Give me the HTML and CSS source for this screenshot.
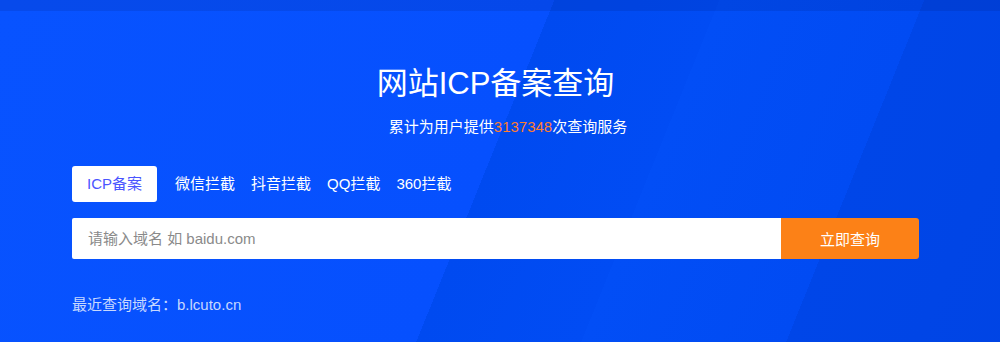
FILE: index.html
```html
<!DOCTYPE html>
<html lang="zh-CN">
<head>
<meta charset="utf-8">
<title>网站ICP备案查询</title>
<link rel="stylesheet" href="styles.css">
</head>
<body>
<div class="page">
  <div class="topbar"></div>
  <main class="hero">
    <h1 class="title">网站ICP备案查询</h1>
    <p class="subtitle">累计为用户提供<span class="count">3137348</span>次查询服务</p>
    <div class="panel">
      <nav class="tabs">
        <span class="tab active">ICP备案</span>
        <span class="tab">微信拦截</span>
        <span class="tab">抖音拦截</span>
        <span class="tab">QQ拦截</span>
        <span class="tab">360拦截</span>
      </nav>
      <form class="search">
        <input class="search-input" type="text" placeholder="请输入域名 如 baidu.com">
        <button class="search-btn" type="button">立即查询</button>
      </form>
      <p class="recent">最近查询域名：<span class="recent-link">b.lcuto.cn</span></p>
    </div>
  </main>
</div>
</body>
</html>
```

FILE: styles.css
```css
html, body {
  margin: 0;
  padding: 0;
}

body {
  width: 1000px;
  height: 342px;
  overflow: hidden;
  font-family: "Liberation Sans", "Noto Sans CJK SC", sans-serif;
  color: #fff;
}

.page {
  height: 342px;
  background:
    linear-gradient(112deg,
      rgb(8, 83, 255) 0,
      rgb(6, 80, 254) 514px,
      rgb(0, 74, 240) 514px,
      rgb(1, 76, 244) 667px,
      rgb(2, 78, 246) 667px,
      rgb(1, 75, 243) 857px,
      rgb(0, 70, 232) 857px,
      rgb(0, 68, 228) 1100px);
}

.topbar {
  height: 11px;
  background: rgba(0, 20, 90, 0.12);
}

.hero {
  width: 991px;
  display: flex;
  flex-direction: column;
  align-items: center;
  padding-top: 53px;
}

.title {
  margin: 0;
  font-size: 31px;
  line-height: 40px;
  font-weight: 400;
  letter-spacing: 0;
}

.subtitle {
  margin: 13px 0 0;
  padding-left: 25px;
  font-size: 15px;
  line-height: 20px;
}

.count {
  color: #ff7d2d;
}

.panel {
  align-self: flex-start;
  margin-left: 72px;
  margin-top: 29px;
  width: 847px;
}

.tabs {
  display: flex;
  align-items: center;
  gap: 16px;
  height: 36px;
}

.tab {
  font-size: 15px;
  line-height: 36px;
  color: #fff;
}

.tab.active {
  background: #fff;
  color: #4a55ff;
  padding: 0 15px;
  margin-right: 2px;
  border-radius: 3px;
}

.search {
  display: flex;
  margin: 16px 0 0;
  height: 41px;
}

.search-input {
  flex: 1;
  border: 0;
  outline: 0;
  margin: 0;
  padding: 0 16px;
  height: 41px;
  font-family: inherit;
  font-size: 15px;
  color: #333;
  background: #fff;
  border-radius: 2px 0 0 2px;
}

.search-input::placeholder {
  color: #8a8a8a;
}

.search-btn {
  width: 138px;
  height: 41px;
  border: 0;
  margin: 0;
  padding: 0;
  background: #fc8117;
  color: #fff;
  font-family: inherit;
  font-size: 15px;
  border-radius: 0 3px 3px 0;
}

.recent {
  margin: 36px 0 0;
  font-size: 15px;
  line-height: 20px;
  color: rgba(255, 255, 255, 0.78);
}
```
